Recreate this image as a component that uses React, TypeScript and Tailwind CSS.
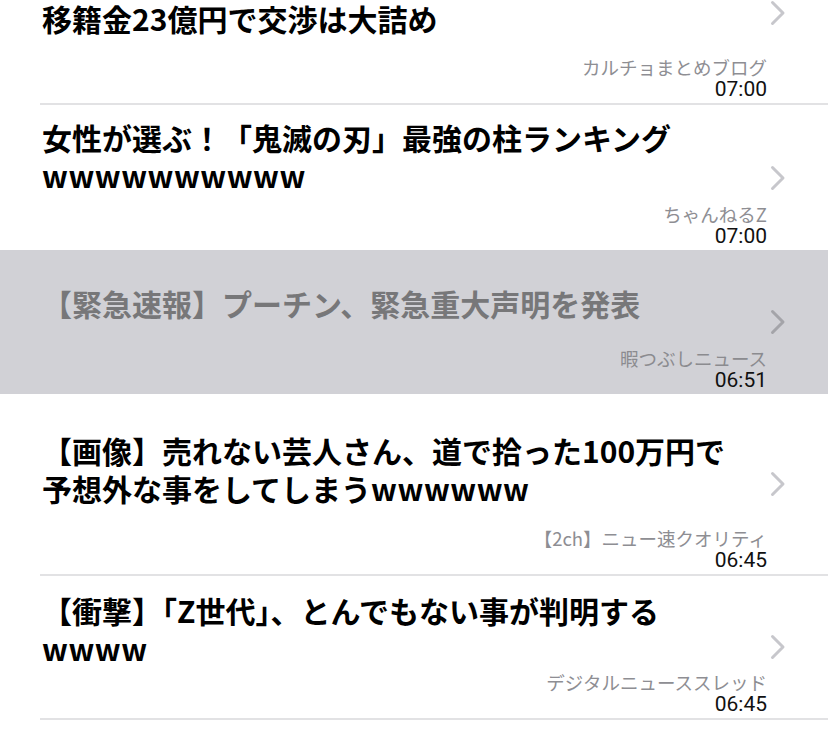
import React from 'react';

type Article = {
  title: React.ReactNode;
  source: string;
  time: string;
  height: number;
  padTop: number;
  read?: boolean;
  divider?: boolean;
};

const W = ({ n }: { n: number }) => (
  <span className="tracking-[0.5px]">{'w'.repeat(n)}</span>
);

const ARTICLES: Article[] = [
  {
    title: (
      <>
        【朗報】久保建英、古巣レアル復帰へ前進
        <br />
        移籍金23億円で交渉は大詰め
      </>
    ),
    source: 'カルチョまとめブログ',
    time: '07:00',
    height: 182,
    padTop: 38,
    divider: true,
  },
  {
    title: (
      <>
        女性が選ぶ！「鬼滅の刃」最強の柱ランキング<W n={10} />
      </>
    ),
    source: 'ちゃんねるZ',
    time: '07:00',
    height: 145,
    padTop: 13,
  },
  {
    title: '【緊急速報】プーチン、緊急重大声明を発表',
    source: '暇つぶしニュース',
    time: '06:51',
    height: 144,
    padTop: 34,
    read: true,
  },
  {
    title: (
      <>
        【画像】売れない芸人さん、道で拾った100万円で予想外な事をしてしまう<W n={6} />
      </>
    ),
    source: '【2ch】ニュー速クオリティ',
    time: '06:45',
    height: 182,
    padTop: 37,
    divider: true,
  },
  {
    title: (
      <>
        【衝撃】「Z世代」、とんでもない事が判明する<W n={4} />
      </>
    ),
    source: 'デジタルニューススレッド',
    time: '06:45',
    height: 144,
    padTop: 15,
    divider: true,
  },
];

function Chevron({ read }: { read?: boolean }) {
  return (
    <svg width="16" height="26" viewBox="0 0 16 26" fill="none">
      <path
        d="M2.5 2.5 L13 13 L2.5 23.5"
        stroke={read ? '#a4a4a9' : '#c7c7cc'}
        strokeWidth="3"
        strokeLinecap="round"
        strokeLinejoin="round"
      />
    </svg>
  );
}

function ArticleRow({ a }: { a: Article }) {
  return (
    <div className={`pl-[40px] ${a.read ? 'bg-[#d1d1d6]' : 'bg-white'}`}>
      <div
        className={`flex ${a.divider ? 'border-b-2 border-[#e2e2e4]' : ''}`}
        style={{ height: a.height }}
      >
        <div className="flex-1 flex flex-col pl-[2px] pb-[3px]" style={{ paddingTop: a.padTop }}>
          <div
            className={`w-[705px] text-[30px] leading-[38px] font-bold ${
              a.read ? 'text-[#777779]' : 'text-black'
            }`}
          >
            {a.title}
          </div>
          <div className="mt-auto text-right">
            <div className={`text-[18.5px] leading-[21px] ${a.read ? 'text-[#8b8b8f]' : 'text-[#8e8e93]'}`}>
              {a.source}
            </div>
            <div className="text-[21px] leading-[22px] text-[#111]" style={{ fontFamily: 'Roboto, sans-serif' }}>
              {a.time}
            </div>
          </div>
        </div>
        <div className="w-[61px] flex items-center pl-[3px]">
          <Chevron read={a.read} />
        </div>
      </div>
    </div>
  );
}

export default function App() {
  return (
    <div
      className="h-[745px] w-[828px] overflow-hidden bg-white"
      style={{ fontFamily: '"Noto Sans CJK JP", "Noto Sans", sans-serif' }}
    >
      <div className="-mt-[77px]">
        {ARTICLES.map((a, i) => (
          <ArticleRow key={i} a={a} />
        ))}
      </div>
    </div>
  );
}
